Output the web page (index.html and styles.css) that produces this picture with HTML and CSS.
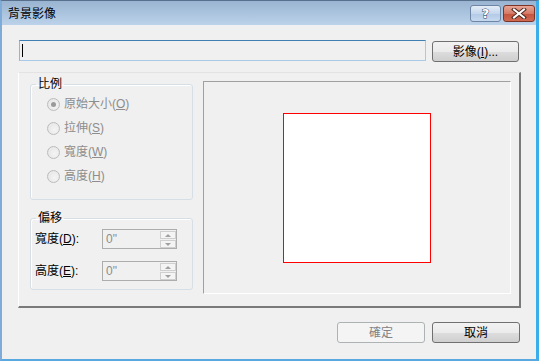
FILE: index.html
```html
<!DOCTYPE html>
<html lang="zh-Hant">
<head>
    <meta charset="UTF-8">
    <title>背景影像</title>
    <link rel="stylesheet" href="styles.css">
</head>
<body>
    <div class="window">
        <div class="titlebar">
            <span class="title">背景影像</span>
            <div class="caption-btns">
                <span class="cap-btn help">?</span>
                <span class="cap-btn close">
                    <svg width="16" height="11" viewBox="0 0 16 11">
                        <path d="M3 1.5 L13 9.5 M13 1.5 L3 9.5" stroke="#4a2620" stroke-width="4" stroke-linecap="square"/>
                        <path d="M3 1.5 L13 9.5 M13 1.5 L3 9.5" stroke="#ffffff" stroke-width="2" stroke-linecap="square"/>
                    </svg>
                </span>
            </div>
        </div>
        <div class="client">
            <div class="file-row">
                <div class="file-field"><span class="caret"></span></div>
                <button class="btn browse">影像(<u>I</u>)...</button>
            </div>
            <div class="frame">
                <div class="side">
                    <fieldset class="group scale">
                        <legend>比例</legend>
                        <label class="radio checked"><span class="dot"></span><span>原始大小(<u>O</u>)</span></label>
                        <label class="radio"><span class="dot"></span><span>拉伸(<u>S</u>)</span></label>
                        <label class="radio"><span class="dot"></span><span>寬度(<u>W</u>)</span></label>
                        <label class="radio"><span class="dot"></span><span>高度(<u>H</u>)</span></label>
                    </fieldset>
                    <fieldset class="group offset">
                        <legend>偏移</legend>
                        <div class="field-row">
                            <span class="field-label">寬度(<u>D</u>):</span>
                            <div class="spin">
                                <span class="spin-value">0"</span>
                                <div class="spin-btns">
                                    <span class="spin-btn up"></span>
                                    <span class="spin-btn down"></span>
                                </div>
                            </div>
                        </div>
                        <div class="field-row">
                            <span class="field-label">高度(<u>E</u>):</span>
                            <div class="spin">
                                <span class="spin-value">0"</span>
                                <div class="spin-btns">
                                    <span class="spin-btn up"></span>
                                    <span class="spin-btn down"></span>
                                </div>
                            </div>
                        </div>
                    </fieldset>
                </div>
                <div class="preview">
                    <div class="page"></div>
                </div>
            </div>
            <div class="actions">
                <button class="btn disabled">確定</button>
                <button class="btn">取消</button>
            </div>
        </div>
    </div>
</body>
</html>
```

FILE: styles.css
```css
body {
    margin: 0;
    font-family: "Liberation Sans", "Noto Sans CJK TC", sans-serif;
    font-size: 12px;
    color: #000;
    background: #fff;
}
.window {
    width: 539px;
    height: 361px;
    box-sizing: border-box;
    border-top: 1px solid #59708c;
    border-left: 2px solid #7fabd9;
    border-right: 3px solid #3aaeea;
    border-bottom: 2px solid #5aa8e0;
    background: #f0f0f0;
    display: flex;
    flex-direction: column;
}
.titlebar {
    height: 24px;
    display: flex;
    align-items: flex-start;
    justify-content: space-between;
    padding: 0 1px 0 6px;
    background: linear-gradient(#99b4d1, #bcd2ea);
}
.title {
    line-height: 14px;
    margin-top: 6px;
}
.caption-btns {
    display: flex;
    gap: 2px;
    margin-top: 4px;
}
.cap-btn {
    height: 15px;
    border-radius: 3px;
    display: flex;
    align-items: center;
    justify-content: center;
}
.help {
    width: 29px;
    border: 1px solid #6e86a6;
    background: linear-gradient(#e4edf7, #c5d7ec 50%, #b2c9e5 51%, #c6d9ef);
    font-family: "DejaVu Sans", sans-serif;
    font-weight: bold;
    font-size: 13px;
    line-height: 15px;
    color: #fff;
    -webkit-text-stroke: 1px #34465c;
    paint-order: stroke fill;
}
.close {
    width: 30px;
    border: 1px solid #7c3328;
    background: linear-gradient(#e8a595, #d57a66 50%, #c4533d 51%, #d06a52);
}
.client {
    flex: 1;
    padding: 15px 16px 0 16px;
}
.file-row {
    display: flex;
    align-items: flex-start;
    justify-content: space-between;
    margin: 0 1px;
}
.file-field {
    width: 403px;
    height: 19px;
    border: 1px solid #a9c9e6;
    border-top-color: #3f7fb2;
    border-left-color: #8fb6da;
    background: #f0f0f0;
    display: flex;
    align-items: center;
    padding-left: 2px;
}
.caret {
    width: 1px;
    height: 13px;
    background: #000;
}
.btn {
    width: 88px;
    height: 21px;
    padding: 0;
    border: 1px solid #707070;
    border-radius: 3px;
    background: linear-gradient(#f2f2f2, #ebebeb 50%, #dddddd 51%, #cfcfcf);
    font-family: "Liberation Sans", "Noto Sans CJK TC", sans-serif;
    font-size: 12px;
    line-height: 14px;
    color: #000;
}
.browse {
    width: 87px;
    margin-top: 1px;
}
.btn.disabled {
    border-color: #adb2b5;
    background: #f4f4f4;
    color: #838383;
}
.frame {
    margin: 10px -1px 0 0;
    height: 236px;
    box-sizing: border-box;
    border-top: 1px solid #e3e3e3;
    border-left: 1px solid #ffffff;
    border-right: 2px solid #7a7a7a;
    border-bottom: 2px solid #7a7a7a;
    padding: 4px 8px 12px 11px;
    display: flex;
    gap: 10px;
}
.side {
    width: 163px;
    display: flex;
    flex-direction: column;
}
.group {
    margin: 0;
    padding: 0;
    border: 1px solid #d5dfe5;
    border-radius: 3px;
    box-shadow: inset 1px 1px 0 #fff;
}
.group legend {
    padding: 0 2px;
    line-height: 14px;
}
.scale {
    padding: 1px 0 11px 16px;
}
.scale legend {
    margin-left: -11px;
}
.offset {
    margin-top: 11px;
    padding: 4px 0 8px 4px;
}
.offset legend {
    margin-left: 1px;
}
.radio {
    height: 24px;
    display: flex;
    align-items: center;
    gap: 4px;
    color: #8d8d8d;
    line-height: 14px;
}
.dot {
    width: 11px;
    height: 11px;
    border: 1px solid #bcbcbc;
    border-radius: 50%;
    background: radial-gradient(circle at 60% 60%, #f4f4f4, #e3e3e3);
    display: flex;
    align-items: center;
    justify-content: center;
}
.radio.checked .dot::after {
    content: "";
    width: 5px;
    height: 5px;
    border-radius: 50%;
    background: #9a9a9a;
}
.field-row {
    display: flex;
    align-items: center;
    height: 20px;
}
.field-row + .field-row {
    margin-top: 12px;
}
.field-label {
    width: 67px;
    line-height: 14px;
}
.spin {
    width: 73px;
    height: 18px;
    border: 1px solid #adadad;
    background: #f0f0f0;
    display: flex;
    align-items: center;
    justify-content: space-between;
}
.spin-value {
    padding-left: 3px;
    color: #8d8d8d;
    line-height: 14px;
}
.spin-btns {
    display: flex;
    flex-direction: column;
    gap: 1px;
    padding: 1px 0 0 0;
    align-self: flex-start;
}
.spin-btn {
    width: 14px;
    height: 6px;
    border: 1px solid #cfcfcf;
    background: #f4f4f4;
    display: flex;
    align-items: center;
    justify-content: center;
}
.spin-btn.up::after {
    content: "";
    border: 3px solid transparent;
    border-bottom: 3px solid #a0a0a0;
    border-top: 0;
}
.spin-btn.down::after {
    content: "";
    border: 3px solid transparent;
    border-top: 3px solid #a0a0a0;
    border-bottom: 0;
}
.preview {
    flex: 1;
    margin-top: 4px;
    border-top: 1px solid #a0a0a0;
    border-left: 1px solid #a0a0a0;
    border-right: 1px solid #ffffff;
    border-bottom: 1px solid #ffffff;
    display: flex;
    align-items: center;
    justify-content: center;
}
.page {
    width: 146px;
    height: 148px;
    border: 1px solid #ff0000;
    background: #fff;
}
.actions {
    display: flex;
    justify-content: flex-end;
    gap: 7px;
    margin-top: 14px;
}
```
